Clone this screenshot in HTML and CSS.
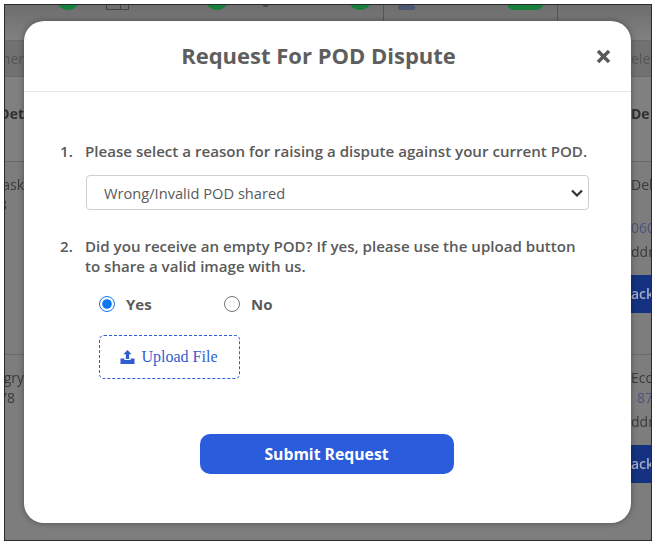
FILE: index.html
```html
<!DOCTYPE html>
<html>
<head>
    <meta charset="utf-8">
    <link rel="stylesheet" href="styles.css">
</head>
<body>
    <div class="frame">
        <div class="backdrop">
            <div class="top-row">
                <span class="dot dot-a"></span>
                <span class="calendar"></span>
                <span class="dot dot-b"></span>
                <span class="mark"></span>
                <span class="dot dot-c"></span>
                <span class="divider divider-a"></span>
                <span class="car"></span>
                <span class="pill"></span>
                <span class="divider divider-b"></span>
            </div>
            <div class="filter-row row">
                <span class="side side-left">her</span>
                <span class="side side-right">elec</span>
            </div>
            <div class="head-row row">
                <span class="side side-left bold">Det</span>
                <span class="side side-right bold">De</span>
            </div>
            <div class="order-row row">
                <div class="side side-left">
                    <p>ask</p>
                    <p class="count-a">8</p>
                </div>
                <div class="side side-right">
                    <p>Del</p>
                    <p class="link far">060</p>
                    <p class="addr">ddr</p>
                    <span class="track">ack</span>
                </div>
            </div>
            <div class="order-row row">
                <div class="side side-left">
                    <p>gry</p>
                    <p class="count-b">78</p>
                </div>
                <div class="side side-right">
                    <p>Eco</p>
                    <p class="link indent">87</p>
                    <p class="addr">ddr</p>
                    <span class="track">ack</span>
                </div>
            </div>
        </div>

        <div class="modal">
            <div class="modal-header">
                <h1>Request For POD Dispute</h1>
                <svg class="close" viewBox="0 0 16 16" width="15" height="15">
                    <path d="M3.4 0.8 8 5.4l4.6-4.6 2.6 2.6L10.6 8l4.6 4.6-2.6 2.6L8 10.6l-4.6 4.6-2.6-2.6L5.4 8 .8 3.4z"/>
                </svg>
            </div>
            <div class="modal-body">
                <div class="question">
                    <span class="num">1.</span>
                    <label for="reason">Please select a reason for raising a dispute against your current POD.</label>
                </div>
                <select id="reason" class="reason">
                    <option>Wrong/Invalid POD shared</option>
                </select>
                <div class="question second">
                    <span class="num">2.</span>
                    <label>Did you receive an empty POD? If yes, please use the upload button to share a valid image with us.</label>
                </div>
                <div class="radio-group">
                    <label class="radio-label"><input type="radio" name="empty" checked> Yes</label>
                    <label class="radio-label"><input type="radio" name="empty"> No</label>
                </div>
                <button class="upload">
                    <svg viewBox="0 0 16 15" width="15" height="14">
                        <path d="M8 0l4.4 4.6H9.8v5H6.2v-5H3.6z"/>
                        <path d="M.5 9.2h4.2v1.6h6.6V9.2h4.2V15H.5z"/>
                    </svg>
                    Upload File
                </button>
                <button class="submit">Submit Request</button>
            </div>
        </div>
    </div>
</body>
</html>
```

FILE: styles.css
```css
html, body {
    margin: 0;
    height: 100%;
    background: white;
}
body {
    padding: 4px 6px 6px 4px;
    box-sizing: border-box;
    font-family: "Open Sans", sans-serif;
}
p {
    margin: 0;
}
.frame {
    position: relative;
    height: 100%;
    overflow: hidden;
    border: 1px solid #2b2b2b;
    box-sizing: border-box;
    background: #7a7a7a;
}

/* page behind the dialog */
.backdrop {
    height: 100%;
    display: flex;
    flex-direction: column;
    color: #3a3a3a;
    font-size: 14px;
    filter: blur(0.4px);
}
.top-row {
    position: relative;
    height: 35px;
    flex: none;
    background: linear-gradient(#6e6e6e, #808080);
}
.dot, .pill, .calendar, .car, .divider, .mark {
    position: absolute;
}
.dot {
    top: -10px;
    width: 20px;
    height: 15px;
    border-radius: 50%;
    background: #17803c;
}
.dot-a { left: 53px; }
.dot-b { left: 202px; }
.dot-c { left: 345px; }
.pill {
    top: -8px;
    left: 502px;
    width: 36px;
    height: 13px;
    border-radius: 7px;
    background: #17803c;
}
.calendar {
    top: -10px;
    left: 101px;
    width: 21px;
    height: 13px;
    border: 1px solid #444;
    background: linear-gradient(90deg, transparent 13px, #444 13px, #444 14px, transparent 14px);
}
.mark {
    top: -1px;
    left: 258px;
    width: 5px;
    height: 3px;
    border-radius: 2px;
    background: #4a4a4a;
}
.car {
    top: 0;
    left: 393px;
    width: 17px;
    height: 5px;
    border-radius: 3px;
    background: #4d5672;
}
.divider {
    top: 0;
    width: 1px;
    height: 16px;
    background: #555;
}
.divider-a { left: 378px; }
.divider-b { left: 552px; }
.row {
    display: flex;
    justify-content: space-between;
    flex: none;
    border-top: 1px solid #6b6b6b;
    box-sizing: border-box;
}
.filter-row {
    height: 36px;
    align-items: center;
    background: #717171;
    color: #555;
}
.head-row {
    height: 85px;
    padding-top: 27px;
    line-height: 20px;
    background: #808080;
}
.order-row {
    height: 193px;
    padding-top: 13px;
    background: #7d7d7d;
    line-height: 20px;
}
.side {
    width: 19px;
    overflow: hidden;
    white-space: nowrap;
}
.side-left {
    display: flex;
    flex-direction: column;
    align-items: flex-end;
}
.side-right {
    width: 20px;
}
.bold {
    font-weight: 700;
    color: #2f2f2f;
}
.link {
    color: #4a5478;
}
.far {
    margin-top: 23px;
}
.indent {
    padding-left: 6px;
}
.addr {
    margin-top: 4px;
}
.count-a {
    padding-right: 17px;
}
.count-b {
    padding-right: 9px;
}
.track {
    display: block;
    margin-top: 13px;
    padding: 9px 0;
    background: #14327f;
    color: #a3abc4;
    font-weight: 600;
    line-height: 20px;
}

/* dialog */
.modal {
    position: absolute;
    top: 16px;
    left: 19px;
    width: 607px;
    height: 502px;
    display: flex;
    flex-direction: column;
    background: white;
    border-radius: 20px;
    box-shadow: 0 0 6px rgba(0, 0, 0, 0.35);
}
.modal-header {
    position: relative;
    height: 71px;
    flex: none;
    display: flex;
    align-items: center;
    justify-content: center;
    padding-right: 18px;
    border-bottom: 1px solid #e8e8e8;
    box-sizing: border-box;
}
h1 {
    margin: 0 0 2px;
    font-size: 22px;
    font-weight: 700;
    color: #5e5e5e;
}
.close {
    position: absolute;
    top: 28px;
    right: 20px;
    fill: #5a5a5a;
}
.modal-body {
    flex: 1;
    display: flex;
    flex-direction: column;
    align-items: flex-start;
    padding: 49px 42px 0 36px;
    color: #5a5a5a;
    font-size: 15.1px;
    font-weight: 600;
    line-height: 20px;
}
.question {
    display: flex;
    gap: 12px;
}
.num {
    width: 13px;
    flex: none;
}
.second {
    margin-top: 26px;
}
.reason {
    width: 503px;
    height: 35px;
    margin: 14px 0 0 26px;
    padding: 0 17px;
    border: 1px solid #d0d0d0;
    border-radius: 4px;
    appearance: none;
    background: white url("data:image/svg+xml,%3Csvg xmlns='http://www.w3.org/2000/svg' width='12' height='8' viewBox='0 0 12 8'%3E%3Cpath d='M1 1.5l5 5 5-5' fill='none' stroke='%23333' stroke-width='2.2'/%3E%3C/svg%3E") no-repeat right 5px center;
    color: #5a5a5a;
    font-family: "Open Sans", sans-serif;
    font-size: 14.65px;
}
.radio-group {
    display: flex;
    margin: 18px 0 0 39px;
}
.radio-label {
    display: flex;
    align-items: center;
    gap: 11px;
    width: 125px;
    font-size: 15px;
    font-weight: 700;
}
.radio-label input {
    width: 16px;
    height: 16px;
    margin: 0;
    accent-color: #0b76f0;
}
.upload {
    width: 141px;
    height: 44px;
    margin: 21px 0 0 39px;
    padding: 0 8px 0 6px;
    display: flex;
    align-items: center;
    justify-content: center;
    gap: 7px;
    border: 1px dashed #2a5cdb;
    border-radius: 5px;
    background: white;
    color: #2f5fce;
    font-family: "Liberation Serif", serif;
    font-size: 16px;
}
.upload svg {
    fill: #2f5fce;
}
.submit {
    align-self: center;
    width: 254px;
    height: 40px;
    margin: 55px 0 0 4px;
    border: none;
    border-radius: 10px;
    background: #2a5cdb;
    color: white;
    font-family: "Open Sans", sans-serif;
    font-size: 15.75px;
    font-weight: 700;
}
```
